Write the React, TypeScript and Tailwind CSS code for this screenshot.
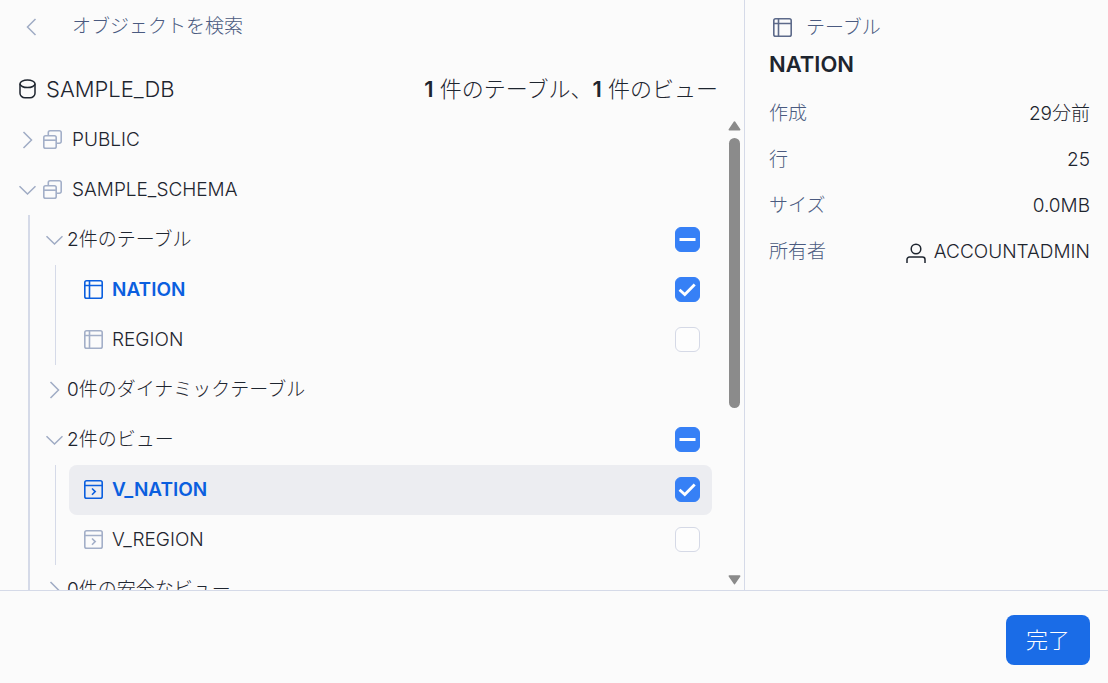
import React, { useEffect, useRef, useState } from 'react';

type ObjectKind = 'table' | 'view';

interface Leaf {
  name: string;
  kind: ObjectKind;
}

interface Group {
  id: string;
  label: string;
  items: Leaf[];
}

const GROUPS: Group[] = [
  {
    id: 'tables',
    label: '2件のテーブル',
    items: [
      { name: 'NATION', kind: 'table' },
      { name: 'REGION', kind: 'table' },
    ],
  },
  { id: 'dynamic', label: '0件のダイナミックテーブル', items: [] },
  {
    id: 'views',
    label: '2件のビュー',
    items: [
      { name: 'V_NATION', kind: 'view' },
      { name: 'V_REGION', kind: 'view' },
    ],
  },
  { id: 'secure', label: '0件の安全なビュー', items: [] },
];

const DETAILS = [
  { label: '作成', value: '29分前' },
  { label: '行', value: '25' },
  { label: 'サイズ', value: '0.0MB' },
  { label: '所有者', value: 'ACCOUNTADMIN', owner: true },
];

const Chevron = ({ open }: { open: boolean }) => (
  <svg viewBox="0 0 18 18" className="size-[18px] shrink-0 text-[#9fabc4]" fill="none" stroke="currentColor" strokeWidth="1.5">
    <path d={open ? 'M1.5 5.2 9.5 13l8-7.8' : 'M5.5 1l8 8-8 8'} />
  </svg>
);

const SchemaIcon = () => (
  <svg viewBox="0 0 20 20" className="size-5 shrink-0 text-[#a3afc8]" fill="none" stroke="currentColor" strokeWidth="1.6">
    <rect x="0.8" y="5.800" width="12.400" height="12.400" rx="1.8" />
    <path d="M0.8 10.200h12.400" />
    <path d="M5.3 5.8V2.6a1.8 1.8 0 0 1 1.8-1.8h9.300a1.8 1.8 0 0 1 1.8 1.8v8.800a1.8 1.8 0 0 1-1.8 1.8h-3.200" />
  </svg>
);

const DatabaseIcon = () => (
  <svg viewBox="0 0 20 20" className="size-5 shrink-0 text-[#1e252f]" fill="none" stroke="currentColor" strokeWidth="1.5">
    <ellipse cx="9.500" cy="4.800" rx="7.500" ry="3.800" />
    <path d="M2 4.800v9.400c0 2.400 2.200 4.600 5 4.600h5c2.800 0 5-2.200 5-4.600V4.800" />
  </svg>
);

const TableIcon = ({ className }: { className: string }) => (
  <svg viewBox="0 0 20 20" className={`size-5 shrink-0 ${className}`} fill="none" stroke="currentColor" strokeWidth="1.6">
    <rect x="0.8" y="0.8" width="17.400" height="17.400" rx="1.8" />
    <path d="M0.800 5.500h17.400M5.500 0.800v17.400" />
  </svg>
);

const ViewIcon = ({ className }: { className: string }) => (
  <svg viewBox="0 0 20 20" className={`size-5 shrink-0 ${className}`} fill="none" stroke="currentColor" strokeWidth="1.6">
    <rect x="0.8" y="0.8" width="17.400" height="17.400" rx="1.8" />
    <path d="M0.800 5.500h17.400M8 8.500l3.200 3.100L8 14.700" />
  </svg>
);

const UserIcon = () => (
  <svg viewBox="0 0 20 20" className="mt-0.5 size-5 shrink-0" fill="none" stroke="currentColor" strokeWidth="1.5">
    <circle cx="10" cy="6" r="4.800" />
    <path d="M1 20v-3.500a2.500 2.500 0 0 1 2.500-2.500h13a2.500 2.500 0 0 1 2.500 2.500V20" />
  </svg>
);

interface TickProps {
  id: string;
  checked: boolean;
  mixed?: boolean;
  onChange: () => void;
}

const Tick: React.FC<TickProps> = ({ id, checked, mixed = false, onChange }) => {
  const ref = useRef<HTMLInputElement>(null);

  useEffect(() => {
    if (ref.current) ref.current.indeterminate = mixed;
  }, [mixed]);

  return (
    <span className="grid h-[26px] w-[25px] shrink-0 content-start">
      <input
        ref={ref}
        id={id}
        type="checkbox"
        checked={checked}
        onChange={onChange}
        className="col-start-1 row-start-1 size-[25px] appearance-none rounded-md border border-[#d5d9e6] bg-[#fdfdfd] checked:border-[#3680f6] checked:bg-[#3680f6] indeterminate:border-[#3680f6] indeterminate:bg-[#3680f6]"
      />
      <svg viewBox="0 0 25 25" className="pointer-events-none col-start-1 row-start-1 size-[25px] text-white" fill="none" stroke="currentColor" strokeWidth="3">
        {mixed && <path d="M4.500 12.500h16" />}
        {checked && !mixed && <path d="M4.500 12.800l5.300 4.700 9.900-10" strokeWidth="2.800" />}
      </svg>
    </span>
  );
};

export default function App() {
  const [checked, setChecked] = useState<string[]>(['NATION', 'V_NATION']);
  const [open, setOpen] = useState<string[]>(['schema', 'tables', 'views']);
  const [query, setQuery] = useState('');

  const flip = (list: string[], id: string) => (list.includes(id) ? list.filter(x => x !== id) : [...list, id]);

  const toggleGroup = (group: Group) => {
    const names = group.items.map(i => i.name);
    const all = names.every(n => checked.includes(n));
    setChecked(prev => [...prev.filter(n => !names.includes(n)), ...(all ? [] : names)]);
  };

  const count = (kind: ObjectKind) =>
    GROUPS.flatMap(g => g.items).filter(i => i.kind === kind && checked.includes(i.name)).length;

  return (
    <div className="flex h-screen flex-col bg-[#fbfbfb] font-['Inter','Noto_Sans_CJK_JP',sans-serif] text-[19px] leading-7 font-light text-[#1e252f]">
      <div className="flex min-h-0 flex-1">
        <main className="flex min-w-0 flex-1 flex-col">
          {/* Search bar */}
          <div className="flex h-[54px] shrink-0 items-center pl-[22px]">
            <button type="button" aria-label="戻る" className="mr-8 flex text-[#9fabc4]">
              <svg viewBox="0 0 18 18" className="size-[18px]" fill="none" stroke="currentColor" strokeWidth="1.5">
                <path d="M13.500 1l-8 8 8 8" />
              </svg>
            </button>
            <input
              type="text"
              aria-label="オブジェクトを検索"
              placeholder="オブジェクトを検索"
              value={query}
              onChange={e => setQuery(e.target.value)}
              className="min-w-0 flex-1 bg-transparent outline-none placeholder:text-[#4a5a80]"
            />
          </div>

          {/* Database header */}
          <div className="flex h-[61px] shrink-0 items-center gap-2 pt-2 pr-[26px] pl-[18px] text-[22px]">
            <DatabaseIcon />
            <h1>SAMPLE_DB</h1>
            <p className="ml-auto">
              <b className="font-semibold">{count('table')}</b> 件のテーブル、<b className="font-semibold">{count('view')}</b> 件のビュー
            </p>
          </div>

          <div className="flex min-h-0 flex-1">
            <div className="min-w-0 flex-1 overflow-y-auto pl-[18px] [scrollbar-width:none]">
              <button type="button" className="flex h-[50px] w-full items-center">
                <Chevron open={false} />
                <span className="ml-[7px] flex items-center gap-[9px]">
                  <SchemaIcon />
                  PUBLIC
                </span>
              </button>
              <button type="button" className="flex h-[50px] w-full items-center" onClick={() => setOpen(flip(open, 'schema'))}>
                <Chevron open={open.includes('schema')} />
                <span className="ml-[7px] flex items-center gap-[9px]">
                  <SchemaIcon />
                  SAMPLE_SCHEMA
                </span>
              </button>

              {open.includes('schema') && (
                <div className="ml-[10px] border-l-2 border-[#d5dae8] pl-[15px]">
                  {GROUPS.map(group => {
                    const picked = group.items.filter(i => checked.includes(i.name)).length;
                    return (
                      <React.Fragment key={group.id}>
                        <div className="flex h-[50px] items-center gap-1 pr-3">
                          <button type="button" aria-label={group.label} onClick={() => setOpen(flip(open, group.id))}>
                            <Chevron open={open.includes(group.id)} />
                          </button>
                          <label htmlFor={group.id} className="flex-1">{group.label}</label>
                          {group.items.length > 0 && (
                            <Tick
                              id={group.id}
                              checked={picked === group.items.length}
                              mixed={picked > 0 && picked < group.items.length}
                              onChange={() => toggleGroup(group)}
                            />
                          )}
                        </div>
                        {open.includes(group.id) && (
                          <div className="ml-[10px] border-l border-[#d5dae8] pl-[13px]">
                            {group.items.map(item => {
                              const on = checked.includes(item.name);
                              const iconColor = on ? 'text-[#0b5fdf]' : 'text-[#a3afc8]';
                              return (
                                <div
                                  key={item.name}
                                  className={`flex h-[50px] items-center gap-2 rounded-lg pr-3 pl-[15px] ${item.name === 'V_NATION' ? 'bg-[#ecedf1]' : ''}`}
                                >
                                  {item.kind === 'table' ? <TableIcon className={iconColor} /> : <ViewIcon className={iconColor} />}
                                  <label htmlFor={item.name} className={`flex-1 ${on ? 'font-semibold text-[#0b5fdf]' : ''}`}>
                                    {item.name}
                                  </label>
                                  <Tick id={item.name} checked={on} onChange={() => setChecked(flip(checked, item.name))} />
                                </div>
                              );
                            })}
                          </div>
                        )}
                      </React.Fragment>
                    );
                  })}
                </div>
              )}
            </div>

            {/* Scrollbar */}
            <div className="mr-[3px] ml-4 flex w-[13px] shrink-0 flex-col items-center gap-[7px] py-[5px] text-[#8b8b8b]">
              <svg viewBox="0 0 13 11" className="h-[11px] w-[13px]" fill="currentColor" stroke="currentColor" strokeWidth="1.500" strokeLinejoin="round">
                <path d="M6.500 2 11.700 9.700H1.300z" />
              </svg>
              <div className="w-[11px] flex-1">
                <div className="h-[63%] rounded-full bg-[#8b8b8b]" />
              </div>
              <svg viewBox="0 0 13 11" className="h-[11px] w-[13px]" fill="currentColor" stroke="currentColor" strokeWidth="1.500" strokeLinejoin="round">
                <path d="M6.500 9.700 11.700 2H1.300z" />
              </svg>
            </div>
          </div>
        </main>

        {/* Object details */}
        <aside className="w-[364px] shrink-0 border-l border-[#d5dae8] pt-[14px] pr-[18px] pl-6">
          <div className="flex items-center gap-[13px] pl-1 text-[#4a5a80]">
            <TableIcon className="text-[#5d6a8a]" />
            テーブル
          </div>
          <h2 className="mt-2 text-[22px] font-semibold">NATION</h2>
          <dl className="mt-[13px]">
            {DETAILS.map(row => (
              <div key={row.label} className="flex h-[46px] items-center justify-between">
                <dt className="text-[#4a5a80]">{row.label}</dt>
                <dd className="flex items-center gap-2">
                  {row.owner && <UserIcon />}
                  {row.value}
                </dd>
              </div>
            ))}
          </dl>
        </aside>
      </div>

      <footer className="flex shrink-0 justify-end border-t border-[#d5dae8] pt-6 pr-[18px] pb-[18px]">
        <button type="button" className="h-[50px] rounded-lg bg-[#1a6ce7] px-5 text-[22px] text-white">
          完了
        </button>
      </footer>
    </div>
  );
}
